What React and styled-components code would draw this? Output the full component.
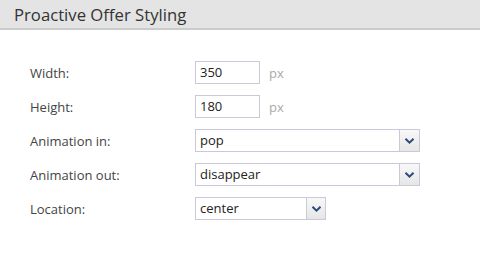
import React from 'react';
import styled, { createGlobalStyle } from 'styled-components';

const GlobalStyle = createGlobalStyle`
  body {
    margin: 0;
    background: #fff;
    font-family: "Open Sans", "Liberation Sans", sans-serif;
  }
`;

const Panel = styled.section`
  width: 480px;
  height: 253px;
  background: #fff;
`;

const Header = styled.header`
  height: 28px;
  background: #e4e4e4;
  border-bottom: 2px solid #cbcbcb;
  display: flex;
  align-items: center;
  padding-left: 14px;
`;

const Title = styled.h2`
  margin: 0;
  font-size: 16.7px;
  font-weight: 400;
  color: #333;
`;

const Form = styled.div`
  padding: 31px 0 0 30px;
  display: flex;
  flex-direction: column;
  gap: 11px;
`;

const Row = styled.div`
  display: grid;
  grid-template-columns: 165px auto;
  align-items: center;
  height: 23px;
`;

const Label = styled.label`
  font-size: 13px;
  color: #444;
`;

const Field = styled.div`
  display: flex;
  align-items: center;
  gap: 9px;
`;

const TextInput = styled.div`
  box-sizing: border-box;
  width: 65px;
  height: 23px;
  border: 1px solid #c9c9d9;
  padding: 0 4px;
  font-size: 13px;
  line-height: 21px;
  color: #222;
`;

const Unit = styled.span`
  font-size: 13px;
  color: #aaa;
`;

const Select = styled.div`
  box-sizing: border-box;
  width: ${(p) => p.$width}px;
  height: 23px;
  border: 1px solid #c9c9d9;
  display: flex;
`;

const Value = styled.span`
  flex: 1;
  padding: 0 4px;
  font-size: 13px;
  line-height: 21px;
  color: #222;
`;

const Arrow = styled.span`
  width: ${(p) => p.$width}px;
  border-left: 1px solid #c9c9d9;
  background: linear-gradient(#f8f8f8, #e6e6e6);
  display: flex;
  align-items: center;
  justify-content: center;
`;

const Chevron = () => (
  <svg width="9" height="6" viewBox="0 0 9 6">
    <path d="M0.5 0.8 L4.5 4.6 L8.5 0.8" fill="none" stroke="#2d4a7c" strokeWidth="2" />
  </svg>
);

export default function App() {
  return (
    <Panel>
      <GlobalStyle />
      <Header>
        <Title>Proactive Offer Styling</Title>
      </Header>
      <Form>
        <Row>
          <Label>Width:</Label>
          <Field>
            <TextInput>350</TextInput>
            <Unit>px</Unit>
          </Field>
        </Row>
        <Row>
          <Label>Height:</Label>
          <Field>
            <TextInput>180</TextInput>
            <Unit>px</Unit>
          </Field>
        </Row>
        <Row>
          <Label>Animation in:</Label>
          <Select $width={225}>
            <Value>pop</Value>
            <Arrow $width={19}><Chevron /></Arrow>
          </Select>
        </Row>
        <Row>
          <Label>Animation out:</Label>
          <Select $width={225}>
            <Value>disappear</Value>
            <Arrow $width={19}><Chevron /></Arrow>
          </Select>
        </Row>
        <Row>
          <Label>Location:</Label>
          <Select $width={131}>
            <Value>center</Value>
            <Arrow $width={18}><Chevron /></Arrow>
          </Select>
        </Row>
      </Form>
    </Panel>
  );
}
